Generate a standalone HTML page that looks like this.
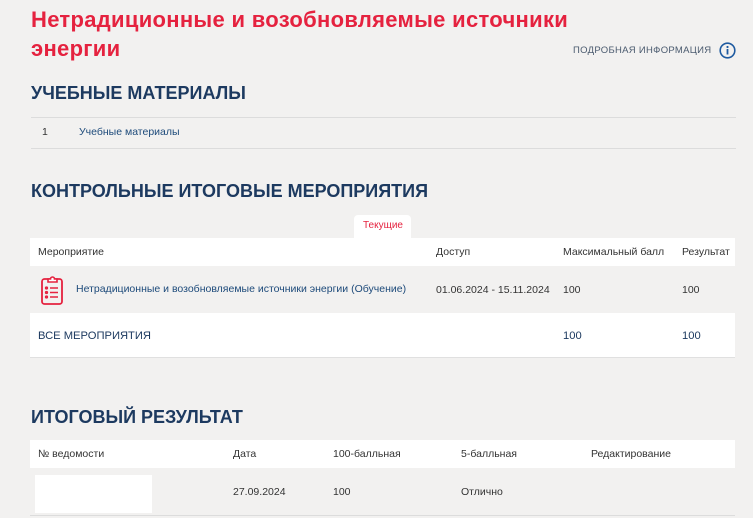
<!DOCTYPE html>
<html><head><meta charset="utf-8"><style>
*{margin:0;padding:0;box-sizing:border-box}
body{width:753px;height:518px;overflow:hidden;background:#f2f1f0;font-family:"Liberation Sans","DejaVu Sans",sans-serif;position:relative;color:#333}
.a{position:absolute;white-space:nowrap}
.t{color:#e5223f;font-size:22px;font-weight:bold;letter-spacing:0.3px;line-height:29px}
.h{color:#1d3a60;font-size:18px;font-weight:bold;letter-spacing:0px}
.s{font-size:10.5px;color:#333}
.l{font-size:10.5px;color:#1d4a7a}
.w{position:absolute;background:#fff}
.line{position:absolute;height:1px;background:#dcdcdc}
</style></head><body>
<div class="a t" style="left:31px;top:5px">Нетрадиционные и возобновляемые источники<br>энергии</div>
<div class="a" style="left:573px;top:45px;font-size:9.5px;color:#4a5a6e;letter-spacing:0.3px">ПОДРОБНАЯ ИНФОРМАЦИЯ</div>
<svg class="a" style="left:719px;top:42px" width="17" height="17" viewBox="0 0 17 17"><circle cx="8.5" cy="8.5" r="7.3" fill="none" stroke="#1e5aa0" stroke-width="1.6"/><circle cx="8.5" cy="5" r="1.1" fill="#1e5aa0"/><rect x="7.6" y="7" width="1.8" height="5.5" fill="#1e5aa0"/></svg>

<div class="a h" style="left:31px;top:83px">УЧЕБНЫЕ МАТЕРИАЛЫ</div>
<div class="line" style="left:31px;top:117px;width:705px"></div>
<div class="a s" style="left:42px;top:126px">1</div>
<div class="a l" style="left:79px;top:126px">Учебные материалы</div>
<div class="line" style="left:31px;top:148px;width:705px"></div>

<div class="a h" style="left:31px;top:181px">КОНТРОЛЬНЫЕ ИТОГОВЫЕ МЕРОПРИЯТИЯ</div>
<div class="w" style="left:354px;top:215px;width:57px;height:24px;border-radius:4px 4px 0 0"></div>
<div class="a" style="left:363px;top:220px;font-size:10px;color:#e5223f">Текущие</div>
<div class="w" style="left:30px;top:238px;width:705px;height:28px"></div>
<div class="a s" style="left:38px;top:246px">Мероприятие</div>
<div class="a s" style="left:436px;top:246px">Доступ</div>
<div class="a s" style="left:563px;top:246px">Максимальный балл</div>
<div class="a s" style="left:682px;top:246px">Результат</div>
<svg class="a" style="left:40px;top:275px" width="26" height="32" viewBox="0 0 26 32"><rect x="2" y="4" width="20" height="25" rx="2.5" fill="none" stroke="#e5223f" stroke-width="1.8"/><path d="M8 4 h2.5 a2 2 0 0 1 4 0 H17 v3 H8z" fill="#fff" stroke="#e5223f" stroke-width="1.6"/><g stroke="#e5223f" stroke-width="1.5" fill="none"><circle cx="6.5" cy="13" r="0.9"/><circle cx="6.5" cy="17.5" r="0.9"/><circle cx="6.5" cy="22" r="0.9"/><path d="M10 13h8M10 17.5h8M10 22h8"/></g></svg>
<div class="a l" style="left:76px;top:283px">Нетрадиционные и возобновляемые источники энергии (Обучение)</div>
<div class="a s" style="left:436px;top:284px">01.06.2024 - 15.11.2024</div>
<div class="a s" style="left:563px;top:284px">100</div>
<div class="a s" style="left:682px;top:284px">100</div>
<div class="w" style="left:30px;top:313px;width:705px;height:45px;border-bottom:1px solid #e0e0e0"></div>
<div class="a" style="left:38px;top:330px;font-size:11.2px;color:#1d3a60">ВСЕ МЕРОПРИЯТИЯ</div>
<div class="a" style="left:563px;top:330px;font-size:11.2px;color:#1d3a60">100</div>
<div class="a" style="left:682px;top:330px;font-size:11.2px;color:#1d3a60">100</div>

<div class="a h" style="left:31px;top:407px">ИТОГОВЫЙ РЕЗУЛЬТАТ</div>
<div class="w" style="left:30px;top:440px;width:705px;height:28px"></div>
<div class="a s" style="left:38px;top:448px">№ ведомости</div>
<div class="a s" style="left:233px;top:448px">Дата</div>
<div class="a s" style="left:333px;top:448px">100-балльная</div>
<div class="a s" style="left:461px;top:448px">5-балльная</div>
<div class="a s" style="left:591px;top:448px">Редактирование</div>
<div class="w" style="left:35px;top:475px;width:117px;height:38px"></div>
<div class="a s" style="left:233px;top:486px">27.09.2024</div>
<div class="a s" style="left:333px;top:486px">100</div>
<div class="a s" style="left:461px;top:486px">Отлично</div>
<div class="line" style="left:30px;top:515px;width:705px"></div>
</body></html>
